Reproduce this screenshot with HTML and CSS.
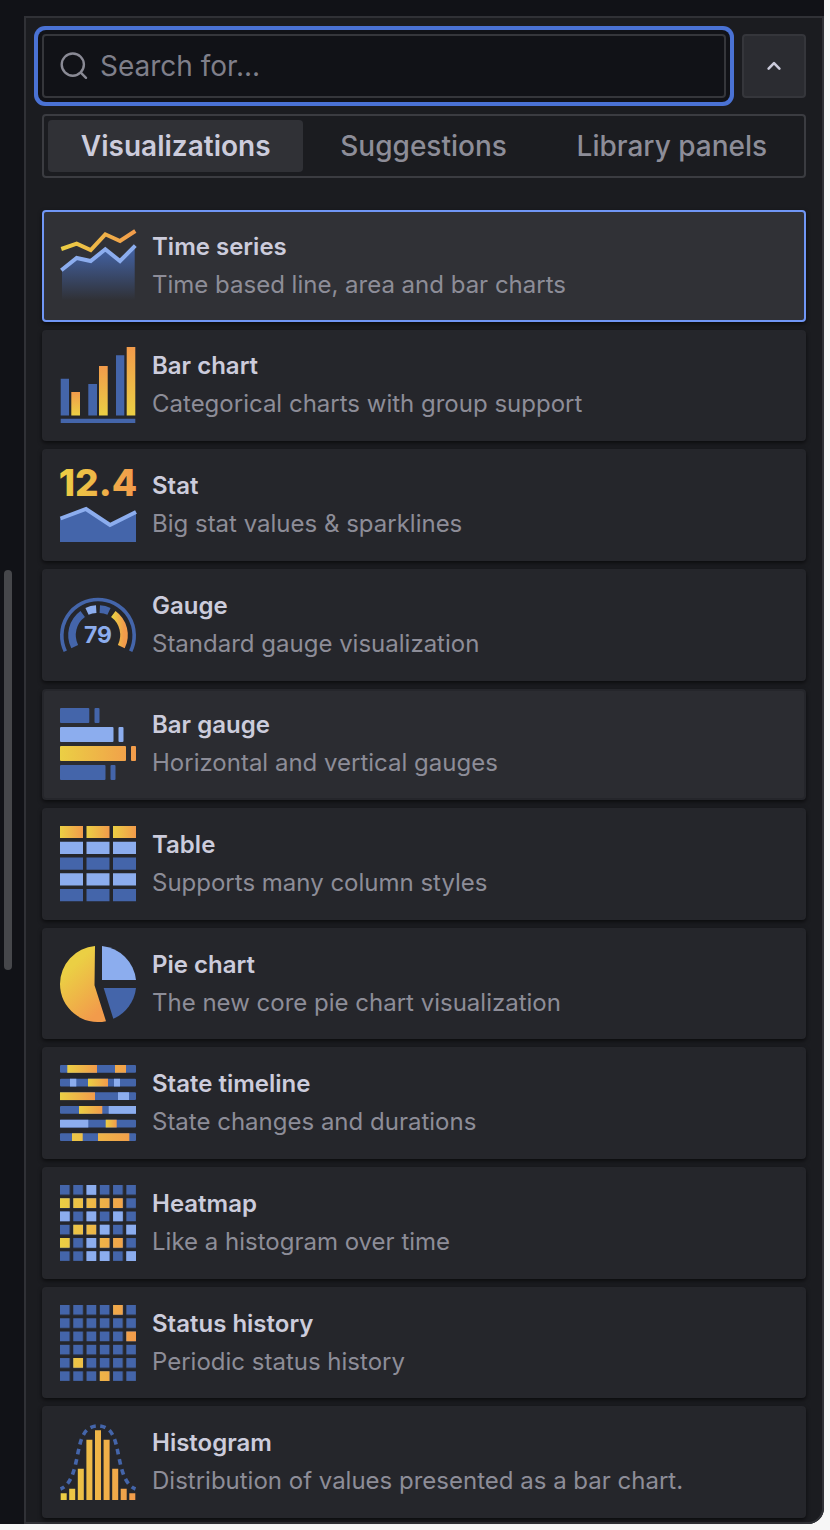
FILE: index.html
```html
<!DOCTYPE html>
<html lang="en">
<head>
<meta charset="utf-8">
<meta name="viewport" content="width=device-width, initial-scale=1">
<title>Visualization picker</title>
<link rel="stylesheet" href="styles.css">
</head>
<body>
<svg class="defs" width="0" height="0" aria-hidden="true">
  <defs>
    <linearGradient id="warm" gradientUnits="userSpaceOnUse" x1="0" y1="0" x2="76" y2="0"><stop offset="0" stop-color="#ebcf44"/><stop offset="1" stop-color="#f29b4b"/></linearGradient>
    <linearGradient id="warm-box"><stop offset="0" stop-color="#ebcf44"/><stop offset="1" stop-color="#f29b4b"/></linearGradient>
    <linearGradient id="warm-up" x1="0" y1="1" x2="0" y2="0"><stop offset="0" stop-color="#ebcf44"/><stop offset="1" stop-color="#f29b4b"/></linearGradient>
    <linearGradient id="warm-diag" x1="0.3" y1="0.25" x2="0.7" y2="0.95"><stop offset="0" stop-color="#ebcf44"/><stop offset="1" stop-color="#f29b4b"/></linearGradient>
    <linearGradient id="fade" x1="0" y1="0" x2="0" y2="1"><stop offset="0" stop-color="#4465aa"/><stop offset="1" stop-color="#4465aa" stop-opacity="0"/></linearGradient>
    <pattern id="cells" width="13.27" height="13.27" patternUnits="userSpaceOnUse"><rect width="9.7" height="9.7" fill="#4465aa"/></pattern>
  </defs>
</svg>
<div class="shell">
  <div class="gutter"><div class="thumb"></div></div>
  <main class="panel">
    <div class="toolbar">
      <label class="search">
        <svg class="search-icon" viewBox="0 0 28 28" aria-hidden="true"><circle cx="12.800" cy="12.600" r="11.100"/><path d="M20.800 20.600l5.200 5.200"/></svg>
        <input class="search-input" type="text" placeholder="Search for..." aria-label="Search for...">
      </label>
      <button class="collapse" type="button" aria-label="Close"><svg class="chevron" viewBox="0 0 16 16" aria-hidden="true"><path d="M2.600 10.600L8 5.200l5.400 5.400"/></svg></button>
    </div>
    <div class="tabs" role="tablist">
      <button class="tab tab-active" type="button" role="tab" aria-selected="true">Visualizations</button>
      <button class="tab" type="button" role="tab" aria-selected="false">Suggestions</button>
      <button class="tab" type="button" role="tab" aria-selected="false">Library panels</button>
    </div>
    <div class="list">
      <button class="card card-selected" type="button">
        <svg class="icon" viewBox="0 0 76 76" aria-hidden="true"><path fill="url(#fade)" d="M2 42L16.700 30l14 3 14.600-11.700L60 33l14.700-15V72H2z"/><path class="line-light" d="M1.300 42.300L16.700 30l14 3 14.600-11.700L60 33l15.300-15.300"/><path class="line-warm" d="M1.300 21l15.400-5.300 14 6.300L45.300 6.300 60 13 75.300 3"/></svg>
        <span class="text"><span class="name">Time series</span><span class="desc">Time based line, area and bar charts</span></span>
      </button>
      <button class="card" type="button">
        <svg class="icon" viewBox="0 0 76 76" aria-hidden="true"><path class="blue" d="M.7 31.700H9v36.800H.7zM28.300 37H37v31.500h-8.700zM56 8.300h8.300v60.200H56zM.7 71.700h74.600V76H.7z"/><g fill="url(#warm-up)"><rect x="11.300" y="45" width="8.700" height="23.500"/><rect x="39" y="19" width="8.700" height="49.500"/><rect x="66.700" y="0" width="8.600" height="68.500"/></g></svg>
        <span class="text"><span class="name">Bar chart</span><span class="desc">Categorical charts with group support</span></span>
      </button>
      <button class="card" type="button">
        <svg class="icon" viewBox="0 0 76 76" aria-hidden="true"><text class="stat-number" x="38" y="29" text-anchor="middle">12.4</text><path class="blue" d="M0 51.500l26-10L50 58l26-13v30H0z"/><path class="line-light" d="M.5 51.500l25.500-9.500L50 58l26-13"/></svg>
        <span class="text"><span class="name">Stat</span><span class="desc">Big stat values &amp; sparklines</span></span>
      </button>
      <button class="card" type="button">
        <svg class="icon" viewBox="0 0 76 76" aria-hidden="true"><path class="arc arc-thin" d="M5.300 64.200A36.200 36.200 0 1 1 70.700 64.200"/><path class="arc" d="M14.700 59.600A26 26 0 0 1 22.700 27"/><path class="arc arc-light" d="M27 24.400A26 26 0 0 1 36.200 22.100"/><path class="arc" d="M39.800 22.100A26 26 0 0 1 49 24.400"/><path class="arc arc-warm" d="M53.300 27A26 26 0 0 1 61.300 59.600"/><text class="gauge-number" x="38" y="56" text-anchor="middle">79</text></svg>
        <span class="text"><span class="name">Gauge</span><span class="desc">Standard gauge visualization</span></span>
      </button>
      <button class="card card-hover" type="button">
        <svg class="icon" viewBox="0 0 76 76" aria-hidden="true"><g class="blue"><rect y="2" width="29.300" height="15" rx="1"/><rect x="34.500" y="2" width="5" height="15" rx="1"/><rect y="59" width="45.500" height="15" rx="1"/><rect x="50.500" y="59" width="5" height="15" rx="1"/></g><g class="light"><rect y="21" width="53.500" height="15" rx="1"/><rect x="58.500" y="21" width="5" height="15" rx="1"/></g><g fill="url(#warm)"><rect y="40" width="66" height="15" rx="1"/><rect x="71" y="40" width="5" height="15" rx="1"/></g></svg>
        <span class="text"><span class="name">Bar gauge</span><span class="desc">Horizontal and vertical gauges</span></span>
      </button>
      <button class="card" type="button">
        <svg class="icon" viewBox="0 0 76 76" aria-hidden="true"><g fill="url(#warm-box)"><rect width="23" height="12"/><rect x="26.500" width="23" height="12"/><rect x="53" width="23" height="12"/></g><path class="light" d="M0 15.800h23V28H0zm26.500 0h23V28h-23zm26.500 0h23V28H53zM0 47.200h23v12.200H0zm26.500 0h23v12.200h-23zm26.500 0h23v12.200H53z"/><path class="blue" d="M0 31.500h23v12.200H0zm26.500 0h23v12.200h-23zm26.500 0h23v12.200H53zM0 63h23v12.200H0zm26.500 0h23v12.200h-23zM53 63h23v12.200H53z"/></svg>
        <span class="text"><span class="name">Table</span><span class="desc">Supports many column styles</span></span>
      </button>
      <button class="card" type="button">
        <svg class="icon" viewBox="0 0 76 76" aria-hidden="true"><path fill="url(#warm-diag)" d="M35 .1A38 38 0 0 0 0 38A38 38 0 0 0 46 75.200L34.500 39.300z"/><path class="light" d="M42 0A38 38 0 0 1 76 34H42z"/><path class="blue" d="M43.700 42H76A38 38 0 0 1 53.300 72.700z"/></svg>
        <span class="text"><span class="name">Pie chart</span><span class="desc">The new core pie chart visualization</span></span>
      </button>
      <button class="card" type="button">
        <svg class="icon" viewBox="0 0 76 76" aria-hidden="true"><g class="blue"><rect width="76" height="7.800" rx="1"/><rect y="13.700" width="76" height="7.800" rx="1"/><rect y="27.300" width="76" height="7.800" rx="1"/><rect y="41" width="76" height="7.800" rx="1"/><rect y="54.700" width="76" height="7.800" rx="1"/><rect y="68.300" width="76" height="7.700" rx="1"/></g><path class="light" d="M10 13.700h6.300v7.800H10zM54 13.700h6v7.800h-6zM58 27.300h11v7.800H58zM48.700 41H76v7.800H48.700zM0 54.700h28.300v7.800H0z"/><g fill="url(#warm-box)"><rect x="7.300" width="29.700" height="7.800"/><rect x="28" y="13.700" width="20" height="7.800"/><rect y="27.300" width="35" height="7.800"/><rect x="19" y="41" width="23.300" height="7.800"/><rect x="45.700" y="54.700" width="11" height="7.800"/></g><path fill="url(#warm)" d="M12 68.300h10.700V76H12zM38 68.300h31.300V76H38zM55 0h11v7.800H55z"/></svg>
        <span class="text"><span class="name">State timeline</span><span class="desc">State changes and durations</span></span>
      </button>
      <button class="card" type="button">
        <svg class="icon" viewBox="0 0 76 76" aria-hidden="true"><path fill="url(#cells)" d="M0 0h76v76H0z"/><path class="light" d="M26.500 0h9.700v9.700h-9.700zM0 26.500h9.700v9.700H0zm26.500 0h9.700v9.700h-9.700zm26.600 0h9.700v9.700h-9.700zM39.800 39.800h9.700v9.700h-9.700zm26.500 0H76v9.700h-9.700zM26.500 53.100h9.700v9.700h-9.700zM26.500 66.300h9.700V76h-9.700zm13.300 0h9.700V76h-9.700zm26.500 0H76V76h-9.700z"/><path fill="url(#warm)" d="M0 13.300h9.700V23H0zm13.300 0H23V23h-9.700zm13.200 0h9.700V23h-9.700zm13.300 0h9.700V23h-9.700zm13.300 0h9.700V23h-9.700zM13.300 39.800H23v9.700h-9.700zm13.200 0h9.700v9.700h-9.700zM0 53.100h9.700v9.700H0zm39.800 0h9.700v9.700h-9.700zm13.300 0h9.700v9.700h-9.700z"/></svg>
        <span class="text"><span class="name">Heatmap</span><span class="desc">Like a histogram over time</span></span>
      </button>
      <button class="card" type="button">
        <svg class="icon" viewBox="0 0 76 76" aria-hidden="true"><path fill="url(#cells)" d="M0 0h76v76H0z"/><path fill="url(#warm)" d="M53.100 0h9.700v9.700h-9.700zM66.300 26.500H76v9.700h-9.700zM13.300 53.100H23v9.700h-9.700zM39.800 66.300h9.700V76h-9.700z"/></svg>
        <span class="text"><span class="name">Status history</span><span class="desc">Periodic status history</span></span>
      </button>
      <button class="card" type="button">
        <svg class="icon" viewBox="0 0 76 76" aria-hidden="true"><path fill="url(#warm)" d="M.7 69.300h6V76h-6zM9.200 64.700h6V76h-6zM17.800 44.700h6V76h-6zM26.400 15.700h6V76h-6zM35 6.300h6V76h-6zM43.600 15.700h6V76h-6zM52.200 44.700h6V76h-6zM60.700 64.700h6V76h-6zM69.300 69.300h6V76h-6z"/><path class="dashes" d="M38 1.800C30 2 23 6 19.500 22C16 36 14 60 .5 65"/><path class="dashes" d="M38 1.800C46 2 53 6 56.500 22C60 36 62 60 75.500 65"/></svg>
        <span class="text"><span class="name">Histogram</span><span class="desc">Distribution of values presented as a bar chart.</span></span>
      </button>
    </div>
  </main>
</div>
</body>
</html>
```

FILE: styles.css
```css
* {
  box-sizing: border-box;
}

body {
  margin: 0;
  min-height: 100vh;
  padding: 0 6px 6px 0;
  display: flex;
  background: #f7f7f7;
  color: #ccccdc;
  font-family: Inter, "Liberation Sans", sans-serif;
}

button,
input {
  font: inherit;
  color: inherit;
}

button {
  cursor: pointer;
}

.defs {
  position: absolute;
}

.shell {
  flex: 1;
  display: flex;
  padding-top: 16px;
  background: #111217;
  border-bottom-right-radius: 16px;
}

.gutter {
  width: 24px;
  padding-left: 4px;
  display: flex;
  align-items: center;
}

.thumb {
  width: 8px;
  height: 400px;
  border-radius: 4px;
  background: #46474b;
}

.panel {
  flex: 1;
  min-width: 0;
  display: flex;
  flex-direction: column;
  padding: 16px 16px 4px;
  background: #1b1c20;
  border: 2px solid #303136;
  border-bottom-right-radius: 16px;
}

.toolbar {
  display: flex;
  gap: 16px;
  margin-bottom: 16px;
}

.search {
  flex: 1;
  height: 64px;
  display: flex;
  align-items: center;
  gap: 12px;
  padding: 0 16px;
  background: #111217;
  border: 2px solid #35363b;
  border-radius: 4px;
  box-shadow: 0 0 0 4px #111217, 0 0 0 8px #4a72d4;
}

.search-icon {
  width: 28px;
  height: 28px;
  fill: none;
  stroke: #8a8a95;
  stroke-width: 2.4;
  stroke-linecap: round;
}

.search-input {
  flex: 1;
  min-width: 0;
  padding: 0;
  border: 0;
  outline: 0;
  background: transparent;
  font-size: 28px;
}

.search-input::placeholder {
  color: #7f7f8a;
  opacity: 1;
}

.collapse {
  width: 64px;
  height: 64px;
  padding: 0;
  display: grid;
  place-items: center;
  background: #2b2c31;
  border: 2px solid #35363b;
  border-radius: 4px;
}

.chevron {
  width: 16px;
  height: 16px;
  fill: none;
  stroke: #ccccdc;
  stroke-width: 2.6;
  stroke-linecap: round;
  stroke-linejoin: round;
}

.tabs {
  height: 64px;
  display: flex;
  gap: 4px;
  padding: 4px;
  margin-bottom: 32px;
  border: 2px solid #3b3c41;
  border-radius: 4px;
}

.tab {
  flex: 1 1 auto;
  padding: 0;
  border: 0;
  border-radius: 4px;
  background: transparent;
  color: #8d8d98;
  font-size: 28px;
  font-weight: 500;
  white-space: nowrap;
}

.tab-active {
  background: #303136;
  color: #ccccdc;
  font-weight: 600;
}

.list {
  flex: 1;
  display: grid;
  grid-auto-rows: 1fr;
  gap: 8px;
}

.card {
  display: flex;
  align-items: center;
  gap: 16px;
  padding: 0 16px;
  background: #25262b;
  border: 2px solid #25262b;
  border-radius: 4px;
  box-shadow: 0 2px 4px rgba(0, 0, 0, 0.6);
  text-align: left;
}

.card-selected {
  background: #303136;
  border-color: #7096f5;
}

.card-hover {
  background: #2b2c31;
}

.icon {
  flex: none;
  width: 76px;
  height: 76px;
  overflow: visible;
}

.text {
  display: flex;
  flex-direction: column;
  min-width: 0;
  font-size: 24px;
  line-height: 38px;
}

.name {
  font-weight: 600;
}

.desc {
  color: #8d8d98;
}

.blue {
  fill: #4465aa;
}

.light {
  fill: #8cadee;
}

.line-light,
.line-warm {
  fill: none;
  stroke: #8cadee;
  stroke-width: 4;
}

.line-warm {
  stroke: url(#warm);
}

.arc {
  fill: none;
  stroke: #4465aa;
  stroke-width: 7.6;
}

.arc-thin {
  stroke-width: 3.6;
}

.arc-light {
  stroke: #8cadee;
}

.arc-warm {
  stroke: url(#warm-box);
}

.stat-number {
  fill: url(#warm);
  font-size: 37px;
  font-weight: 800;
}

.gauge-number {
  fill: #8cadee;
  font-size: 23px;
  font-weight: 700;
}

.dashes {
  fill: none;
  stroke: #4465aa;
  stroke-width: 3.6;
  stroke-dasharray: 5.6 4.7;
  stroke-dashoffset: -2.2;
}
```
